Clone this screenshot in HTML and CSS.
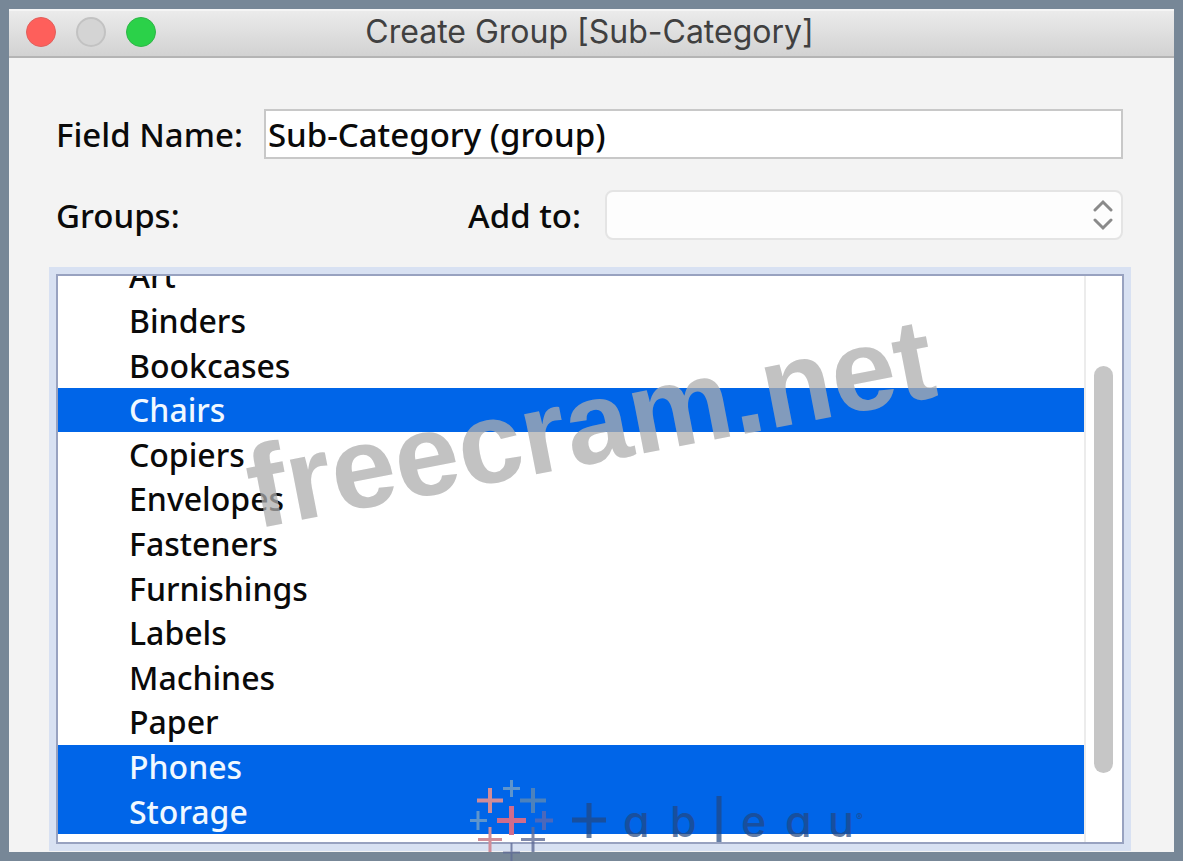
FILE: index.html
```html
<!DOCTYPE html>
<html lang="en">
<head>
    <meta charset="UTF-8">
    <meta name="viewport" content="width=device-width, initial-scale=1.0">
    <title>Create Group [Sub-Category]</title>
    <link rel="stylesheet" href="styles.css">
</head>
<body>

    <div class="window">
        <header class="titlebar">
            <div class="lights">
                <button class="light close" aria-label="Close"></button>
                <button class="light minimize" aria-label="Minimize" disabled></button>
                <button class="light zoom" aria-label="Zoom"></button>
            </div>
            <h1>Create Group [Sub-Category]</h1>
        </header>

        <form class="content">
            <div class="row">
                <label for="field_name">Field Name:</label>
                <input type="text" id="field_name" value="Sub-Category (group)">
            </div>

            <div class="row groups-row">
                <span id="groups_label">Groups:</span>
                <div class="add-to">
                    <label for="add_to">Add to:</label>
                    <div class="select-wrap">
                        <select id="add_to">
                            <option value=""></option>
                        </select>
                        <svg class="arrows" viewBox="0 0 20 32" aria-hidden="true">
                            <path d="M2 11 L10 3 L18 11 M2 21 L10 29 L18 21"/>
                        </svg>
                    </div>
                </div>
            </div>

            <div class="list-box">
                <ul class="list" role="listbox" aria-multiselectable="true" aria-labelledby="groups_label" tabindex="0">
                    <li role="option">Art</li>
                    <li role="option">Binders</li>
                    <li role="option">Bookcases</li>
                    <li role="option" class="selected" aria-selected="true">Chairs</li>
                    <li role="option">Copiers</li>
                    <li role="option">Envelopes</li>
                    <li role="option">Fasteners</li>
                    <li role="option">Furnishings</li>
                    <li role="option">Labels</li>
                    <li role="option">Machines</li>
                    <li role="option">Paper</li>
                    <li role="option" class="selected" aria-selected="true">Phones</li>
                    <li role="option" class="selected" aria-selected="true">Storage</li>
                </ul>
                <div class="scrollbar"><div class="thumb"></div></div>
            </div>
        </form>
    </div>

    <div class="watermark">freecram.net</div>

    <svg class="logo" viewBox="0 0 400 81" role="img" aria-label="tableau">
        <!-- plus signs -->
        <g fill="none">
            <path class="coral" stroke-width="5" d="M27 40.5H56M41.5 26V55"/>
            <path class="salmon" stroke-width="4" d="M7 20.5H33M20 8V33"/>
            <path class="salmon" stroke-width="3" d="M8 59.5H32M20 47V72"/>
            <path class="steel" stroke-width="4" d="M50 20.5H76M63 8V33"/>
            <path class="sky" stroke-width="3" d="M33 8.5H50M41.5 0V17"/>
            <path class="sky" stroke-width="3" d="M0 40.5H17M8 31V50"/>
            <path class="violet" stroke-width="4" d="M65 40.5H83M74 31V50"/>
            <path class="navy" stroke-width="3" d="M51 59.5H75M63 47V72"/>
            <path class="navy" stroke-width="2" d="M33 72.5H50M41.5 63V81"/>
        </g>
        <!-- wordmark -->
        <g class="word">
            <path stroke-width="5" d="M102 40H136M119 23V58M249 16V62"/>
            <text x="153" y="57">a</text>
            <text x="200" y="57">b</text>
            <text x="271" y="57">e</text>
            <text x="315" y="57">a</text>
            <text x="358" y="57">u</text>
            <text class="reg" x="386" y="41">®</text>
        </g>
    </svg>

</body>
</html>
```
FILE: styles.css
```css
* {
    box-sizing: border-box;
}

body {
    margin: 0;
    height: 100vh;
    padding: 9px;
    background-color: #778797;
    font-family: "Noto Sans", "Open Sans", sans-serif;
    font-size: 32px;
    font-weight: 500;
    color: #0a0a0a;
    position: relative;
    overflow: hidden;
}

.window {
    height: 100%;
    display: flex;
    flex-direction: column;
    background-color: #f3f3f3;
}

.titlebar {
    display: grid;
    grid-template-columns: 196px 1fr 200px;
    align-items: center;
    height: 49px;
    padding-bottom: 4px;
    background: linear-gradient(#ebebeb, #d2d2d2);
    border-top: 2px solid #f5f5f5;
    border-bottom: 2px solid #b4b4b4;
}

.titlebar h1 {
    margin: 0;
    font-family: Inter, Roboto, sans-serif;
    font-size: 32px;
    line-height: 40px;
    font-weight: 400;
    color: #404040;
    text-align: center;
    white-space: nowrap;
}

.lights {
    display: flex;
    gap: 20px;
    padding-left: 17px;
}

.light {
    width: 30px;
    height: 30px;
    padding: 0;
    border-radius: 50%;
}

.close {
    background-color: #fe5f5b;
    border: 1px solid #e0605c;
}

.minimize {
    background-color: #d4d4d4;
    border: 2px solid #c2c2c2;
}

.zoom {
    background-color: #2bd149;
    border: 1px solid #2fb548;
}

.content {
    flex: 1;
    min-height: 0;
    display: flex;
    flex-direction: column;
    padding: 51px 50px 8px 47px;
}

.row {
    display: flex;
    align-items: center;
    justify-content: space-between;
    gap: 21px;
    height: 50px;
    padding-right: 1px;
    font-size: 33px;
}

.row input {
    flex: 1;
    min-width: 0;
    height: 50px;
    padding: 0 2px;
    border: 2px solid #c8c8c8;
    background-color: #fff;
    font: inherit;
    color: inherit;
}

.groups-row {
    margin-top: 31px;
}

.add-to {
    display: flex;
    align-items: center;
    gap: 24px;
}

.select-wrap {
    position: relative;
    width: 518px;
}

.select-wrap select {
    display: block;
    width: 100%;
    height: 50px;
    appearance: none;
    background-color: #fdfdfd;
    border: 2px solid #e4e4e4;
    border-radius: 8px;
    font: inherit;
}

.arrows {
    position: absolute;
    right: 10px;
    top: 9px;
    width: 20px;
    height: 32px;
    fill: none;
    stroke: #8a8a8a;
    stroke-width: 3;
    stroke-linecap: round;
    pointer-events: none;
}

.list-box {
    flex: 1;
    min-height: 0;
    display: flex;
    margin-top: 34px;
    background-color: #fff;
    border: 2px solid #98a2c0;
    box-shadow: 0 0 0 7px #d8e1f2;
    overflow: hidden;
}

/* scrolled down a little, first item is half hidden */
.list {
    flex: 1;
    display: flex;
    flex-direction: column;
    margin: -22px 0 8px;
    padding: 0;
    list-style: none;
    outline: none;
}

.list li {
    flex: 1;
    display: flex;
    align-items: center;
    min-height: 0;
    padding-left: 71px;
    line-height: 44px;
}

.list .selected {
    background-color: #0065e8;
    color: #f0f8ff;
}

.scrollbar {
    width: 38px;
    padding: 90px 9px 69px 8px;
    border-left: 2px solid #ececec;
}

.thumb {
    height: 100%;
    border-radius: 10px;
    background-color: #c6c6c6;
}

.watermark {
    position: absolute;
    left: 242px;
    top: 357px;
    font-family: "Liberation Sans", Arial, sans-serif;
    font-size: 116px;
    line-height: 132px;
    font-weight: bold;
    color: rgba(174, 174, 174, 0.75);
    transform: rotate(-11deg);
    pointer-events: none;
}

.logo {
    position: absolute;
    left: 470px;
    top: 780px;
    width: 400px;
    height: 81px;
    pointer-events: none;
}

.coral { stroke: #d06c8c; }
.salmon { stroke: #d08c98; }
.steel { stroke: #4c82bc; }
.sky { stroke: #5f95cc; }
.violet { stroke: #4b68bb; }
.navy { stroke: #5f6c96; stroke-opacity: 0.8; }

.word {
    opacity: 0.7;
    fill: #23477f;
    stroke: #23477f;
}

.word text {
    font-family: Inter, sans-serif;
    font-size: 43px;
    font-weight: 500;
    font-feature-settings: "cv11";
    stroke: none;
}

.word .reg {
    font-size: 10px;
}
```
